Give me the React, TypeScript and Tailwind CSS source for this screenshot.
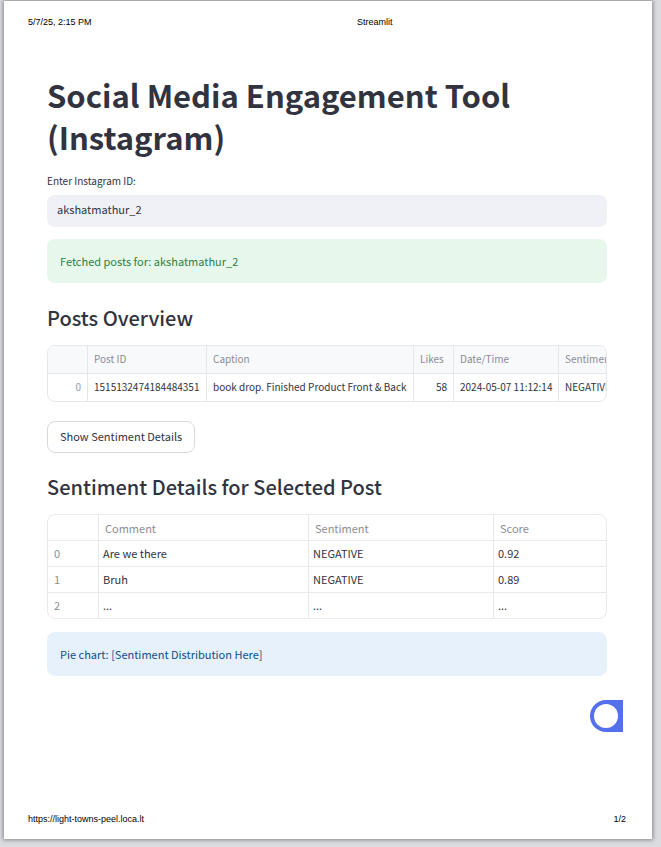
import { useState } from "react";

const posts = [
  {
    id: "1515132474184484351",
    caption: "book drop. Finished Product Front & Back",
    likes: 58,
    date: "2024-05-07 11:12:14",
    sentiment: "NEGATIVE",
  },
];

const comments = [
  { comment: "Are we there", sentiment: "NEGATIVE", score: "0.92" },
  { comment: "Bruh", sentiment: "NEGATIVE", score: "0.89" },
  { comment: "...", sentiment: "...", score: "..." },
];

function PostsTable() {
  const head = "border-r border-b border-[#e6e7ea] px-1.5 pb-0.5 text-left font-normal";
  const cell = "border-r border-[#e6e7ea] px-1.5 pb-px";
  return (
    <div className="mt-[13px] overflow-hidden rounded-lg border border-[#e6e7ea]">
      <table className="w-[600px] table-fixed border-separate border-spacing-0 text-[10px] leading-4 whitespace-nowrap">
        <colgroup>
          <col className="w-10" />
          <col className="w-[119px]" />
          <col className="w-[207px]" />
          <col className="w-10" />
          <col className="w-[105px]" />
          <col />
        </colgroup>
        <thead className="bg-[#f8f9fb] text-[#8b8d95]">
          <tr className="h-7">
            <th className={head} aria-label="Index" />
            <th className={head}>Post ID</th>
            <th className={head}>Caption</th>
            <th className={head}>Likes</th>
            <th className={head}>Date/Time</th>
            <th className={head}>Sentiment</th>
          </tr>
        </thead>
        <tbody>
          {posts.map((post, i) => (
            <tr key={post.id} className="h-[27px]">
              <td className={`${cell} text-right text-[#9a9ca3]`}>{i}</td>
              <td className={cell}>{post.id}</td>
              <td className={cell}>{post.caption}</td>
              <td className={`${cell} text-right`}>{post.likes}</td>
              <td className={cell}>{post.date}</td>
              <td className={cell}>{post.sentiment}</td>
            </tr>
          ))}
        </tbody>
      </table>
    </div>
  );
}

function CommentsTable() {
  const head = "border-l border-[#e9eaec] px-1.5 text-left font-normal";
  const cell = "border-t border-l border-[#e9eaec] px-1 pb-0.5";
  return (
    <div className="mt-[13px] overflow-hidden rounded-lg border border-[#e9eaec]">
      <table className="w-full table-fixed border-separate border-spacing-0 text-[11px] leading-4">
        <colgroup>
          <col className="w-[50px]" />
          <col className="w-[210px]" />
          <col className="w-[185px]" />
          <col />
        </colgroup>
        <thead className="text-[#8b8d95]">
          <tr className="h-[25px]">
            <th aria-label="Index" />
            <th className={head}>Comment</th>
            <th className={head}>Sentiment</th>
            <th className={head}>Score</th>
          </tr>
        </thead>
        <tbody>
          {comments.map((row, i) => (
            <tr key={i} className="h-[26px]">
              <td className="border-t border-[#e9eaec] px-1.5 pb-0.5 text-[#8b8d95]">{i}</td>
              <td className={cell}>{row.comment}</td>
              <td className={cell}>{row.sentiment}</td>
              <td className={cell}>{row.score}</td>
            </tr>
          ))}
        </tbody>
      </table>
    </div>
  );
}

export default function App() {
  const [account, setAccount] = useState("akshatmathur_2");
  return (
    <div className="flex min-h-screen flex-col bg-[#dbdce0] pt-px pr-[9px] pb-2 pl-1">
      <div className="flex flex-1 flex-col bg-white font-['Noto_Sans_CJK_SC',sans-serif] text-[#31333f] shadow-[0_0_4px_1px_#85868a]">
        <header className="grid grid-cols-[11fr_9fr] pt-[15px] pr-[26px] pl-6 font-['Liberation_Sans',sans-serif] text-[9px] leading-3 text-black">
          <span>5/7/25, 2:15 PM</span>
          <span>Streamlit</span>
        </header>

        <main className="pt-[46px] pr-[45px] pl-[43px]">
          <h1 className="text-[31px] leading-[42px] font-bold">Social Media Engagement Tool (Instagram)</h1>

          <label htmlFor="account" className="mt-[15px] block text-[10px] leading-4">
            Enter Instagram ID:
          </label>
          <input
            id="account"
            value={account}
            onChange={(e) => setAccount(e.target.value)}
            className="mt-1.5 block h-8 w-full rounded-lg bg-[#f0f1f6] px-2.5 pb-1 text-[11px] outline-none"
          />

          <div role="status" className="mt-3 rounded-lg bg-[#e8f7ec] px-[13px] py-3.5 text-[11px] leading-4 text-[#2a8245]">
            Fetched posts for: {account}
          </div>

          <h2 className="mt-[21px] text-xl leading-7 font-medium">Posts Overview</h2>
          <PostsTable />

          <button
            type="button"
            className="mt-[19px] block h-8 rounded-lg border border-[#d9dadd] px-3 pb-0.5 text-[11px] leading-4"
          >
            Show Sentiment Details
          </button>

          <h2 className="mt-5 text-xl leading-7 font-medium">Sentiment Details for Selected Post</h2>
          <CommentsTable />

          <div role="note" className="mt-[13px] rounded-lg bg-[#e7f1fb] px-[13px] py-3.5 text-[11px] leading-4 text-[#0f4c8c]">
            Pie chart: [Sentiment Distribution Here]
          </div>
        </main>

        <div className="mt-6 flex justify-end pr-[29px]">
          <svg width="33" height="32" viewBox="0 0 33 32" aria-hidden="true">
            <path d="M33 0H16a16 16 0 0 0 0 32h17z" fill="#5570ee" />
            <circle cx="16" cy="16" r="12" fill="#fff" />
          </svg>
        </div>

        <footer className="mt-auto flex justify-between pr-[26px] pb-3.5 pl-6 font-['Liberation_Sans',sans-serif] text-[9px] leading-3 text-black">
          <span>https://light-towns-peel.loca.lt</span>
          <span>1/2</span>
        </footer>
      </div>
    </div>
  );
}
